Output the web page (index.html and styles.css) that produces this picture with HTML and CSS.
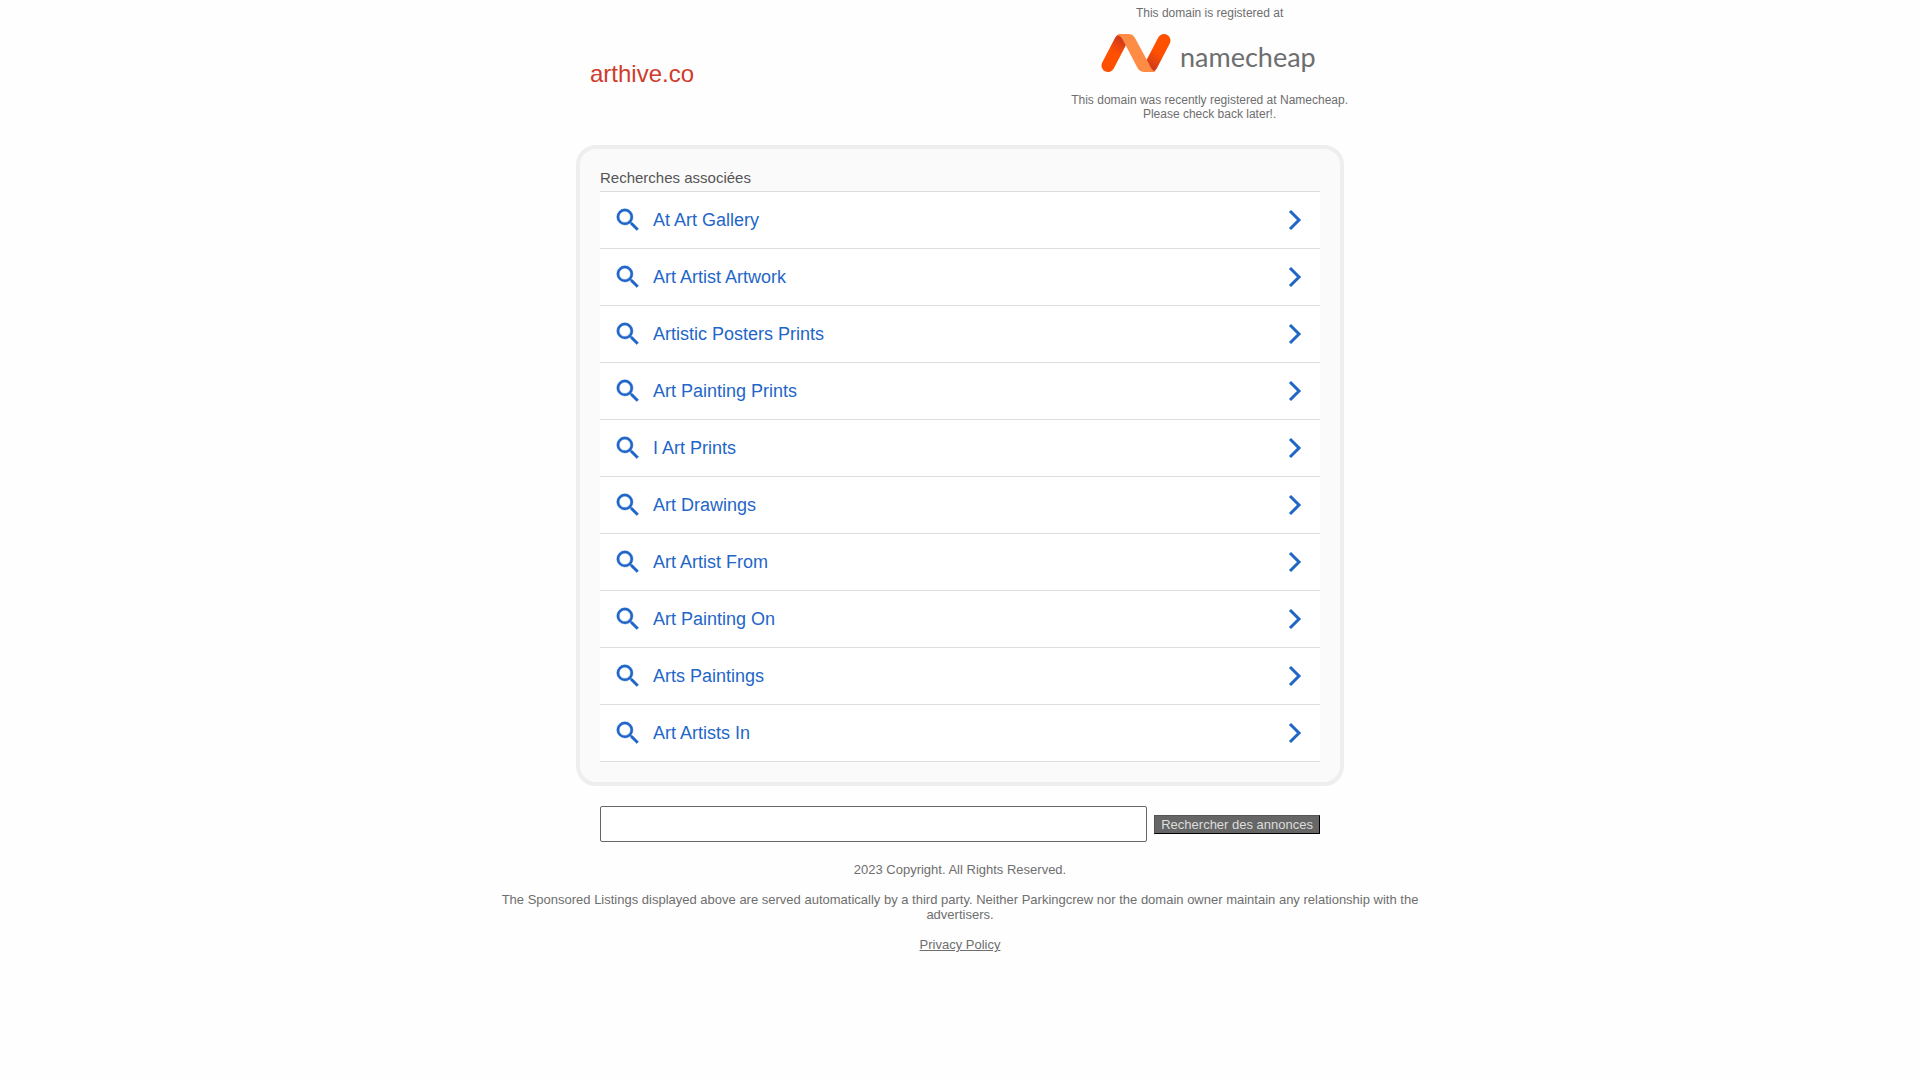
FILE: index.html
```html
<!DOCTYPE html>
<html lang="fr">
<head>
<meta charset="utf-8">
<meta name="viewport" content="width=device-width, initial-scale=1">
<title>arthive.co</title>
<link rel="stylesheet" href="styles.css">
</head>
<body>
<svg class="sprite" aria-hidden="true">
  <symbol id="search" viewBox="0 0 24 24"><path d="M15.5 14h-.79l-.28-.27A6.471 6.471 0 0 0 16 9.500 6.500 6.500 0 1 0 9.500 16c1.610 0 3.090-.59 4.230-1.570l.27.28v.79l5 4.990L20.490 19l-4.990-5zm-6 0C7.010 14 5 11.990 5 9.500S7.010 5 9.500 5 14 7.010 14 9.500 11.990 14 9.500 14z" stroke="currentColor" stroke-width=".3"/></symbol>
  <symbol id="chevron" viewBox="0 0 14 22"><path d="M2 2L11 11L2 20" fill="none" stroke="currentColor" stroke-width="3"/></symbol>
</svg>
<header class="header">
  <h1 class="domain">arthive.co</h1>
  <div class="registrar">
    <p>This domain is registered at</p>
    <a class="logo" href="#" aria-label="Namecheap">
      <svg width="220" height="73" viewBox="0 0 220 73">
        <defs>
          <linearGradient id="left" gradientUnits="userSpaceOnUse" x1="8" y1="46" x2="22" y2="20"><stop offset=".5" stop-color="#ff5000"/><stop offset="1" stop-color="#d23a1c"/></linearGradient>
          <linearGradient id="right" gradientUnits="userSpaceOnUse" x1="64" y1="20" x2="50" y2="46"><stop offset=".5" stop-color="#ff5000"/><stop offset="1" stop-color="#d23a1c"/></linearGradient>
        </defs>
        <g fill="none" stroke-width="13" stroke-linecap="round">
          <path stroke="url(#left)" d="M8 45.500L21 20.500"/>
          <path stroke="url(#right)" d="M64 20.500L51 45.500"/>
        </g>
        <path fill="#ff8c44" d="M20 14H28Q33 14 35 18L48 42L51 48Q53 51 56 52H45Q39 52 37 47L24 22Q20 14 17 16Q18 14 20 14Z"/>
        <text class="wordmark" x="80" y="47">namecheap</text>
      </svg>
    </a>
    <p>This domain was recently registered at Namecheap.<br>Please check back later!.</p>
  </div>
</header>
<main class="content">
  <section class="card" aria-labelledby="related">
    <h2 class="related" id="related">Recherches associées</h2>
    <ul class="results">
      <li><a href="#"><svg class="search"><use href="#search"/></svg><span>At Art Gallery</span><svg class="chevron"><use href="#chevron"/></svg></a></li>
      <li><a href="#"><svg class="search"><use href="#search"/></svg><span>Art Artist Artwork</span><svg class="chevron"><use href="#chevron"/></svg></a></li>
      <li><a href="#"><svg class="search"><use href="#search"/></svg><span>Artistic Posters Prints</span><svg class="chevron"><use href="#chevron"/></svg></a></li>
      <li><a href="#"><svg class="search"><use href="#search"/></svg><span>Art Painting Prints</span><svg class="chevron"><use href="#chevron"/></svg></a></li>
      <li><a href="#"><svg class="search"><use href="#search"/></svg><span>I Art Prints</span><svg class="chevron"><use href="#chevron"/></svg></a></li>
      <li><a href="#"><svg class="search"><use href="#search"/></svg><span>Art Drawings</span><svg class="chevron"><use href="#chevron"/></svg></a></li>
      <li><a href="#"><svg class="search"><use href="#search"/></svg><span>Art Artist From</span><svg class="chevron"><use href="#chevron"/></svg></a></li>
      <li><a href="#"><svg class="search"><use href="#search"/></svg><span>Art Painting On</span><svg class="chevron"><use href="#chevron"/></svg></a></li>
      <li><a href="#"><svg class="search"><use href="#search"/></svg><span>Arts Paintings</span><svg class="chevron"><use href="#chevron"/></svg></a></li>
      <li><a href="#"><svg class="search"><use href="#search"/></svg><span>Art Artists In</span><svg class="chevron"><use href="#chevron"/></svg></a></li>
    </ul>
  </section>
  <form class="searchbox">
    <input type="text" name="q" aria-label="Rechercher des annonces">
    <button type="submit">Rechercher des annonces</button>
  </form>
</main>
<footer class="footer">
  <p>2023 Copyright. All Rights Reserved.</p>
  <p>The Sponsored Listings displayed above are served automatically by a third party. Neither Parkingcrew nor the domain owner maintain any relationship with the advertisers.</p>
  <p><a href="#">Privacy Policy</a></p>
</footer>
</body>
</html>
```
FILE: styles.css
```css
* { box-sizing: border-box; }

body {
  margin: 0;
  background: #fefefe;
  color: #6e6e6e;
  font-family: "Liberation Sans", Arial, sans-serif;
}

h1, h2, p, ul { margin: 0; padding: 0; font-weight: normal; }

.sprite { display: none; }

.header {
  display: flex;
  justify-content: space-between;
  align-items: flex-start;
  max-width: 960px;
  margin: 0 auto 24px;
  padding: 6px 92px 0 110px;
}

.domain {
  padding-top: 54px;
  color: #d03c2c;
  font-size: 24px;
  line-height: 28px;
}

.registrar {
  text-align: center;
  font-size: 12px;
  line-height: 14px;
}

.logo { display: block; }
.logo svg { display: block; margin: 0 auto; }

.wordmark {
  fill: #6d6e70;
  font-family: Lato, "Open Sans", sans-serif;
  font-size: 27px;
}

.content {
  max-width: 768px;
  margin: 0 auto;
}

.card {
  padding: 20px;
  border: 4px solid #eee;
  border-radius: 20px;
  background: #fafafa;
}

.related {
  color: #555;
  font-size: 15px;
  line-height: 18px;
  padding-bottom: 4px;
}

.results {
  list-style: none;
  background: #fff;
  border-top: 1px solid #ddd;
}

.results li { border-bottom: 1px solid #ddd; }

.results a {
  display: flex;
  align-items: center;
  min-height: 56px;
  padding: 0 18px 0 13px;
  color: #1f66c8;
  font-size: 18px;
  line-height: 22px;
  text-decoration: none;
}

.results span { flex: 1; }

.search {
  width: 30px;
  height: 30px;
  margin-right: 10px;
  fill: currentColor;
}

.chevron { width: 14px; height: 22px; }

.searchbox {
  display: flex;
  align-items: center;
  gap: 7px;
  padding: 20px 24px 0;
}

.searchbox input {
  flex: 1;
  min-width: 0;
  height: 36px;
  padding: 0 8px;
  border: 1px solid #666;
  border-radius: 2px;
  background: #fff;
  font: 16px "Liberation Sans", Arial, sans-serif;
}

.searchbox button {
  padding: 1px 6px;
  border: 1px solid;
  border-color: #555 #000 #000 #555;
  background: #666;
  color: #ddd;
  font: 13px/15px "Liberation Sans", Arial, sans-serif;
}

.footer {
  display: flex;
  flex-direction: column;
  gap: 15px;
  max-width: 960px;
  margin: 20px auto 0;
  font-size: 13px;
  line-height: 15px;
  text-align: center;
}

.footer a { color: inherit; }
```
